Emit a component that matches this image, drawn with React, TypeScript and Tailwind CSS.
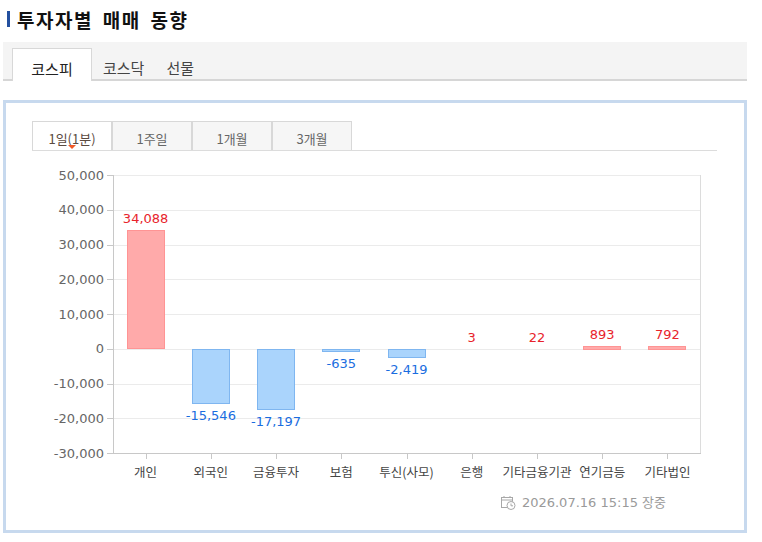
import React from 'react';

const data = [
  { name: '개인', value: 34088 },
  { name: '외국인', value: -15546 },
  { name: '금융투자', value: -17197 },
  { name: '보험', value: -635 },
  { name: '투신(사모)', value: -2419 },
  { name: '은행', value: 3 },
  { name: '기타금융기관', value: 22 },
  { name: '연기금등', value: 893 },
  { name: '기타법인', value: 792 },
];

const plotL = 113;
const plotR = 700;
const plotT = 175;
const plotB = 453;
const yMax = 50000;
const yMin = -30000;
const y = (v: number) => plotT + ((yMax - v) * (plotB - plotT)) / (yMax - yMin);
const band = (plotR - plotL) / data.length;
const ticks = [50000, 40000, 30000, 20000, 10000, 0, -10000, -20000, -30000];
const fmt = (v: number) => (v < 0 ? '-' : '') + Math.abs(v).toLocaleString('en-US');

const Chart = () => {
  const zero = y(0);
  return (
    <svg width={738} height={340} viewBox="6 151 738 340" className="block">
      {ticks.map(t => (
        <g key={t}>
          <line x1={plotL} x2={plotR} y1={Math.round(y(t)) + 0.5} y2={Math.round(y(t)) + 0.5} stroke="#ebebeb" />
          <line x1={107} x2={plotL} y1={Math.round(y(t)) + 0.5} y2={Math.round(y(t)) + 0.5} stroke="#c8c8c8" />
          <text x={104} y={y(t) + 4.5} textAnchor="end" fontSize={13} fill="#666" fontFamily="'DejaVu Sans', sans-serif">
            {t.toLocaleString('en-US')}
          </text>
        </g>
      ))}
      <line x1={plotR + 0.5} x2={plotR + 0.5} y1={plotT} y2={plotB} stroke="#dcdcdc" />
      <line x1={plotL + 0.5} x2={plotL + 0.5} y1={plotT} y2={plotB + 0.5} stroke="#c8c8c8" />
      <line x1={plotL} x2={plotR + 1} y1={plotB + 0.5} y2={plotB + 0.5} stroke="#c8c8c8" />
      {data.map((d, i) => {
        const cx = plotL + band * (i + 0.5);
        const x0 = Math.round(cx - 19) + 0.5;
        const top = d.value >= 0 ? y(d.value) : zero;
        const bot = d.value >= 0 ? zero : y(d.value);
        const pos = d.value >= 0;
        return (
          <g key={d.name}>
            <line x1={Math.round(cx) + 0.5} x2={Math.round(cx) + 0.5} y1={plotB} y2={plotB + 6} stroke="#c8c8c8" />
            {bot - top >= 1 && (
              <rect
                x={x0}
                y={Math.round(top) + 0.5}
                width={37}
                height={Math.max(1, Math.round(bot - top))}
                fill={pos ? '#ffaaaa' : '#aad4fc'}
                stroke={pos ? '#ff9494' : '#7fb6f0'}
              />
            )}
            <text
              x={cx}
              y={pos ? top - 7 : bot + 17}
              textAnchor="middle"
              fontSize={13}
              fill={pos ? '#e8232b' : '#1a6de0'}
              fontFamily="'DejaVu Sans', sans-serif"
            >
              {fmt(d.value)}
            </text>
            <text x={cx} y={476.5} textAnchor="middle" fontSize={12.5} fill="#444" fontFamily="'Noto Sans CJK KR', sans-serif">
              {d.name}
            </text>
          </g>
        );
      })}
    </svg>
  );
};

const periods = ['1일(1분)', '1주일', '1개월', '3개월'];

export default function App() {
  return (
    <div className="w-[762px] h-[542px] bg-white overflow-hidden font-['Noto_Sans_CJK_KR',sans-serif]">
      <div className="flex items-center h-[38px] pl-[7px]">
        <span className="w-[3px] h-[16px] bg-[#24509f]" />
        <h1 className="ml-[7px] text-[19px] font-bold leading-none tracking-[1.5px] [word-spacing:4px] text-[#111]">
          투자자별 매매 동향
        </h1>
      </div>

      <div className="ml-[3px] mt-[4px] w-[744px] h-[39px] bg-[#f4f4f4] border-b-2 border-[#d6d6d6] flex items-end pl-[9px]">
        <div className="w-[80px] h-[33px] -mb-[2px] bg-white border border-b-0 border-[#d8d8d8] pt-[10px] text-center text-[15px] leading-[20px] text-[#222]">
          코스피
        </div>
        <div className="h-[33px] -mb-[2px] px-[11px] pt-[10px] text-[15px] leading-[20px] text-[#444]">코스닥</div>
        <div className="h-[33px] -mb-[2px] px-[11px] pt-[10px] text-[15px] leading-[20px] text-[#444]">선물</div>
      </div>

      <div className="ml-[3px] mt-[19px] w-[744px] h-[433px] border-[3px] border-[#c7d9ee]">
        <div className="pt-[18px] pl-[26px]">
          <div className="w-[685px] flex border-b border-[#dcdcdc]">
            {periods.map((p, i) => (
              <div
                key={p}
                className={
                  i === 0
                    ? 'relative w-[80px] h-[29px] -mb-px pb-px bg-white border border-b-0 border-[#d8d8d8] pt-[8px] text-center text-[13px] leading-[18px] text-[#5a4a40]'
                    : 'w-[80px] h-[29px] bg-[#f6f6f6] border border-b-0 border-[#d8d8d8] pt-[8px] text-center text-[13px] leading-[18px] text-[#666]'
                }
              >
                {p}
                {i === 0 && (
                  <span className="absolute bottom-[1px] left-1/2 -translate-x-1/2 w-0 h-0 border-l-[4px] border-r-[4px] border-t-[4px] border-l-transparent border-r-transparent border-t-[#f05a28]" />
                )}
              </div>
            ))}
          </div>
        </div>

        <Chart />

        <div className="mt-[3px] h-[18px] flex items-center justify-end pr-[78px] gap-[6px] text-[13px] text-[#9a9a9a] font-['DejaVu_Sans','Noto_Sans_CJK_KR',sans-serif]">
          <svg width="15" height="14" viewBox="0 0 15 14" fill="none" stroke="#a8a8a8" strokeWidth="1">
            <rect x="0.5" y="1.5" width="11" height="10" />
            <line x1="0.5" y1="4" x2="11.5" y2="4" />
            <line x1="3" y1="0" x2="3" y2="2" />
            <line x1="9" y1="0" x2="9" y2="2" />
            <circle cx="10" cy="9.5" r="4" fill="#fff" />
            <path d="M10 7.5 V9.8 H12" />
          </svg>
          <span>2026.07.16 15:15 장중</span>
        </div>
      </div>
    </div>
  );
}
